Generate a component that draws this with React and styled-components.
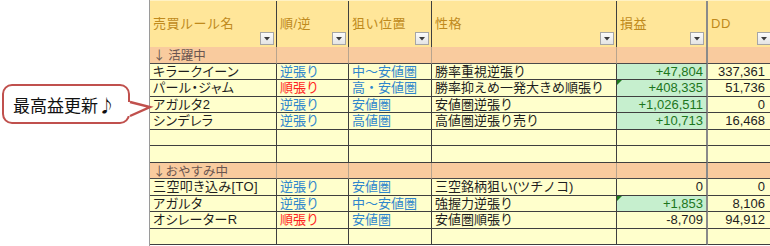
import styled, { createGlobalStyle } from "styled-components";

const GlobalStyle = createGlobalStyle`
    html, body{
        margin: 0;
        padding: 0;
        background: #ffffff;
        overflow: hidden;
    }
    body{
        font-family: "Liberation Sans", "Noto Sans CJK JP", sans-serif;
    }
`;

const columns = "127px 72px 83px 185px 91px 66px";

const headers = ["売買ルール名", "順/逆", "狙い位置", "性格", "損益", "DD"];

const rows = [
    { section: "↓ 活躍中" },
    { name: "キラークイーン", dir: "逆張り", zone: "中～安値圏", kind: "勝率重視逆張り", pl: "+47,804", good: true, dd: "337,361" },
    { name: "パール・ジャム", dir: "順張り", trend: true, zone: "高・安値圏", kind: "勝率抑えめ一発大きめ順張り", pl: "+408,335", good: true, mark: true, dd: "51,736" },
    { name: "アガルタ2", dir: "逆張り", zone: "安値圏", kind: "安値圏逆張り", pl: "+1,026,511", good: true, dd: "0" },
    { name: "シンデレラ", dir: "逆張り", zone: "高値圏", kind: "高値圏逆張り売り", pl: "+10,713", good: true, dd: "16,468" },
    {},
    {},
    { section: "↓おやすみ中" },
    { name: "三空叩き込み[TO]", dir: "逆張り", zone: "安値圏", kind: "三空銘柄狙い(ツチノコ)", pl: "0", dd: "0" },
    { name: "アガルタ", dir: "逆張り", zone: "中～安値圏", kind: "強握力逆張り", pl: "+1,853", good: true, mark: true, dd: "8,106" },
    { name: "オシレーターR", dir: "順張り", trend: true, zone: "安値圏", kind: "安値圏順張り", pl: "-8,709", dd: "94,912" },
    {},
];

function FilterButton(){
    return <StyledFilter>
        <svg width="6" height="4" viewBox="0 0 6 4"><path d="M0 0h6L3 3.5z" fill="#3c3c3c" /></svg>
    </StyledFilter>
}

export default function App(){
    return <Page>
        <GlobalStyle />
        <Side>
            <Bubble>
                最高益更新♪
                <Tail width="26" height="24" viewBox="0 0 26 24">
                    <path d="M0 4H4L24 9L4 18H0z" fill="#ffffff" />
                    <path d="M4 4L24 9L4 18" fill="none" stroke="#c0504d" strokeWidth="2.4" strokeLinejoin="miter" />
                </Tail>
            </Bubble>
        </Side>
        <Table>
            <HeaderRow>
                {headers.map((h, i) => (
                    <HeaderCell key={h} $last={i === 4}>
                        <span>{h}</span>
                        <FilterButton />
                    </HeaderCell>
                ))}
            </HeaderRow>
            {rows.map((r, i) => r.section ? (
                <SectionRow key={i}>
                    <SectionCell>{r.section}</SectionCell>
                    <SectionCell />
                    <SectionCell />
                    <SectionCell />
                    <SectionCell $last />
                    <SectionCell />
                </SectionRow>
            ) : (
                <Row key={i}>
                    <NameCell>{r.name}</NameCell>
                    <Cell $tone={r.dir ? (r.trend ? "red" : "blue") : undefined}>{r.dir}</Cell>
                    <Cell $tone={r.zone ? "blue" : undefined}>{r.zone}</Cell>
                    <Cell>{r.kind}</Cell>
                    <Cell $num $good={r.good} $mark={r.mark} $last>{r.pl}</Cell>
                    <Cell $num $pad={8}>{r.dd}</Cell>
                </Row>
            ))}
        </Table>
    </Page>
}

const Page = styled.div`
    display: flex;
    width: 770px;
    height: 246px;
    overflow: hidden;
`;

const Side = styled.div`
    flex: 0 0 149px;
    padding: 84px 0 0 2px;
    box-sizing: border-box;
    position: relative;
    z-index: 2;
`;

const Bubble = styled.div`
    position: relative;
    width: 128px;
    height: 40px;
    box-sizing: border-box;
    border: 2.4px solid #c0504d;
    border-radius: 10px;
    background: #ffffff;
    display: flex;
    align-items: center;
    padding-left: 9px;
    font-family: "Noto Sans CJK JP", sans-serif;
    font-size: 17px;
    color: #111111;
    white-space: nowrap;
`;

const Tail = styled.svg`
    position: absolute;
    left: 122px;
    top: 12px;
    overflow: visible;
`;

const Table = styled.div`
    flex: 0 0 auto;
    display: flex;
    flex-direction: column;
    border-left: 1px solid #9a9a9a;
    font-size: 13px;
    color: #1e1e1e;
`;

const HeaderRow = styled.div`
    display: grid;
    grid-template-columns: ${columns};
    height: 47px;
    background: #ffe699;
    border-top: 1px solid #fff2c4;
    box-sizing: border-box;
`;

const HeaderCell = styled.div`
    display: flex;
    flex-direction: column;
    box-sizing: border-box;
    padding: 15px 0 0 3px;
    border-right: ${({ $last }) => ($last ? "2px solid #8a8a8a" : "1px solid #3f3f3f")};
    border-bottom: 1px solid #c9b07a;
    color: #c08a1c;
    line-height: 16px;
    letter-spacing: 0.5px;
    white-space: nowrap;
`;

const StyledFilter = styled.div`
    margin-top: auto;
    margin-bottom: 2px;
    margin-right: 2px;
    align-self: flex-end;
    width: 14px;
    height: 13px;
    box-sizing: border-box;
    border: 1px solid #a6a6a6;
    background: linear-gradient(#fbfbfb, #e4e4e4);
    display: flex;
    align-items: center;
    justify-content: center;
    svg{
        display: block;
        margin-top: 1px;
    }
`;

const Row = styled.div`
    display: grid;
    grid-template-columns: ${columns};
    height: 16.5px;
    background: #ffffcc;
`;

const SectionRow = styled(Row)`
    background: #f9cb9e;
`;

const Cell = styled.div`
    position: relative;
    box-sizing: border-box;
    border-right: ${({ $last }) => ($last ? "2px solid #8a8a8a" : "1px solid #3f3f3f")};
    border-bottom: 1px solid #3f3f3f;
    padding: 0 ${({ $num, $pad }) => ($num ? `${$pad || 3}px` : "0")} 0 ${({ $num }) => ($num ? "0" : "3px")};
    text-align: ${({ $num }) => ($num ? "right" : "left")};
    line-height: 15.5px;
    white-space: nowrap;
    overflow: hidden;
    background: ${({ $good }) => ($good ? "#c6efce" : "transparent")};
    color: ${({ $tone, $good }) =>
        $tone === "blue" ? "#2f86cc" : $tone === "red" ? "#ff1f1f" : $good ? "#1d761d" : "#1e1e1e"};
    &::before{
        content: "";
        display: ${({ $mark }) => ($mark ? "block" : "none")};
        position: absolute;
        left: 0;
        top: 0;
        border-top: 5px solid #1e7a1e;
        border-right: 5px solid transparent;
    }
`;

const NameCell = styled(Cell)`
    font-feature-settings: "palt";
    letter-spacing: 0.4px;
`;

const SectionCell = styled(Cell)`
    font-family: "Noto Sans CJK JP", sans-serif;
    font-size: 12.5px;
    line-height: 15px;
    overflow: visible;
    color: #6a5650;
    border-right-color: ${({ $last }) => ($last ? "#8a8a8a" : "#b8a48e")};
    border-bottom-color: #4a4a4a;
`;
